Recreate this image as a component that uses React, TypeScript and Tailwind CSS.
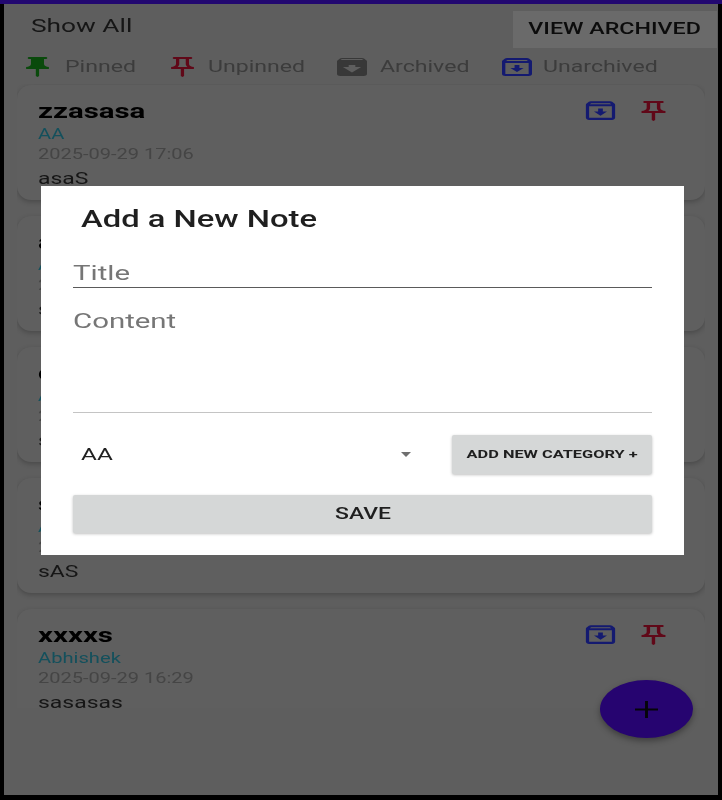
import React from 'react';

const PIN_OUTLINE =
    'M14 4v5c0 1.12.37 2.16 1 3H9c.65-.86 1-1.9 1-3V4h4m3-2H7c-.55 0-1 .45-1 1s.45 1 1 1h1v5c0 1.66-1.34 3-3 3v2h5.97v7l1 1 1-1v-7H19v-2c-1.66 0-3-1.34-3-3V4h1c.55 0 1-.45 1-1s-.45-1-1-1z';
const PIN_FILLED =
    'M16 9V4h1c.55 0 1-.45 1-1s-.45-1-1-1H7c-.55 0-1 .45-1 1s.45 1 1 1h1v5c0 1.66-1.34 3-3 3v2h5.97v7l1 1 1-1v-7H19v-2c-1.66 0-3-1.34-3-3z';
const ARCHIVE_OUTLINE =
    'm20.54 5.23-1.39-1.68C18.88 3.21 18.47 3 18 3H6c-.47 0-.88.21-1.16.55L3.46 5.23C3.17 5.57 3 6.02 3 6.5V19c0 1.1.9 2 2 2h14c1.1 0 2-.9 2-2V6.5c0-.48-.17-.93-.46-1.27zM6.24 5h11.52l.81.97H5.44l.8-.97zM5 19V8h14v11H5zm8.45-9h-2.9v3H8l4 4 4-4h-2.55z';
const ARCHIVE_FILLED =
    'M20.54 5.23l-1.39-1.68C18.88 3.21 18.47 3 18 3H6c-.47 0-.88.21-1.16.55L3.46 5.23C3.17 5.57 3 6.02 3 6.5V19c0 1.1.9 2 2 2h14c1.1 0 2-.9 2-2V6.5c0-.48-.17-.93-.46-1.27zM12 17.5L6.5 12H10v-2h4v2h3.5L12 17.5zM5.12 5l.81-1h12l.94 1H5.12z';

interface IIcon {
    d: string;
    className: string;
}

const Icon = ({ d, className }: IIcon) => (
    <svg viewBox="0 0 24 24" preserveAspectRatio="none" className={className} fill="currentColor">
        <path d={d} />
    </svg>
);

// the whole screenshot is stretched sideways, so text gets the same treatment
const Wide = ({ children, center }: { children: React.ReactNode; center?: boolean }) => (
    <span
        className={
            center
                ? 'inline-block origin-center scale-x-[1.4] whitespace-nowrap'
                : 'inline-block origin-left scale-x-[1.4] whitespace-nowrap'
        }
    >
        {children}
    </span>
);

interface INote {
    title: string;
    category: string;
    date: string;
    body: string;
}

const notes: INote[] = [
    { title: 'zzasasa', category: 'AA', date: '2025-09-29 17:06', body: 'asaS' },
    { title: 'asasas', category: 'AA', date: '2025-09-29 17:02', body: 'sasas' },
    { title: 'cscsc', category: 'AA', date: '2025-09-29 16:50', body: 'sasa' },
    { title: 'sasas', category: 'Abhishek', date: '2025-09-29 16:41', body: 'sAS' },
    { title: 'xxxxs', category: 'Abhishek', date: '2025-09-29 16:29', body: 'sasasas' },
];

const NoteCard = ({ title, category, date, body }: INote) => (
    <div className="relative h-[115px] shrink-0 rounded-[14px] bg-[#5f5f5f] pl-[21px] pt-[13px] shadow-[0_2px_5px_rgba(0,0,0,0.22)]">
        <div className="text-[21px] leading-[26px] font-bold text-black">
            <Wide>{title}</Wide>
        </div>
        <div className="mt-[2px] text-[14.4px] leading-[18px] text-[#14505c]">
            <Wide>{category}</Wide>
        </div>
        <div className="text-[14.3px] leading-[20px] text-[#454545]">
            <Wide>{date}</Wide>
        </div>
        <div className="mt-[4px] text-[16.4px] leading-[22px] text-[#161616]">
            <Wide>{body}</Wide>
        </div>
        <div className="absolute top-[13px] right-[31px] flex items-center gap-[13px]">
            <Icon d={ARCHIVE_OUTLINE} className="h-[25px] w-[39px] text-[#141a70]" />
            <Icon d={PIN_OUTLINE} className="h-[24px] w-[41px] text-[#600818]" />
        </div>
    </div>
);

export default function App() {
    return (
        <div className="relative h-[800px] w-[722px] overflow-hidden bg-black font-['Roboto',sans-serif] blur-[0.7px]">
            <div className="h-[4px] bg-[#220870]" />
            <div className="mx-[4px] flex h-[791px] flex-col bg-[#5e5e5e]">
                <div className="flex h-[44px] items-start justify-between pl-[27px] pr-[1px] pt-[7px]">
                    <span className="mt-[3px] text-[18.8px] leading-[24px] text-[#161616]">
                        <Wide>Show All</Wide>
                    </span>
                    <div className="flex h-[37px] w-[204px] items-center justify-center bg-[#6a6a6a] text-[16.6px] font-medium text-[#0c0c0c]">
                        <Wide center>VIEW ARCHIVED</Wide>
                    </div>
                </div>
                <div className="flex h-[38px] items-center pl-[14px] text-[16.5px] text-[#3c3c3c]">
                    <Icon d={PIN_FILLED} className="h-[24px] w-[39px] text-[#0a4a0c]" />
                    <span className="ml-[8px] w-[98px]">
                        <Wide>Pinned</Wide>
                    </span>
                    <Icon d={PIN_OUTLINE} className="h-[24px] w-[39px] text-[#600818]" />
                    <span className="ml-[6px] w-[124px]">
                        <Wide>Unpinned</Wide>
                    </span>
                    <Icon d={ARCHIVE_FILLED} className="h-[24px] w-[40px] text-[#383838]" />
                    <span className="ml-[8px] w-[117px]">
                        <Wide>Archived</Wide>
                    </span>
                    <Icon d={ARCHIVE_OUTLINE} className="h-[24px] w-[40px] text-[#141a70]" />
                    <span className="ml-[6px]">
                        <Wide>Unarchived</Wide>
                    </span>
                </div>
                <div className="mx-[13px] -mt-[2px] flex h-[624px] flex-col gap-[16px] overflow-hidden pt-[1px]">
                    {notes.map((note) => (
                        <NoteCard key={note.title} {...note} />
                    ))}
                </div>
            </div>

            {/* add note dialog */}
            <div className="absolute top-[186px] left-[41px] h-[369px] w-[643px] bg-white">
                <div className="pl-[40px] pt-[17px] text-[23.4px] leading-[32px] font-medium text-[#1f1f1f]">
                    <Wide>Add a New Note</Wide>
                </div>
                <div className="mx-[32px] mt-[13px] flex h-[40px] items-end border-b border-[#5a5a5a] text-[21px] leading-[28px] text-[#767676]">
                    <Wide>Title</Wide>
                </div>
                <div className="mx-[32px] h-[125px] border-b border-[#c4c4c4] pt-[19px] text-[21px] leading-[28px] text-[#767676]">
                    <Wide>Content</Wide>
                </div>
                <div className="mx-[32px] mt-[22px] flex h-[39px] items-center">
                    <span className="ml-[8px] text-[17.4px] text-[#222222]">
                        <Wide>AA</Wide>
                    </span>
                    <svg viewBox="0 0 14 7" className="ml-auto mr-[39px] h-[5px] w-[14px] fill-[#6f6f6f]">
                        <path d="M0 0h14L7 7z" />
                    </svg>
                    <div className="flex h-[39px] w-[200px] items-center justify-center rounded-[2px] bg-[#d5d7d7] text-[11.7px] font-bold text-[#1f1f1f] shadow-[0_1px_3px_rgba(0,0,0,0.25)]">
                        <Wide center>ADD NEW CATEGORY +</Wide>
                    </div>
                </div>
                <div className="mx-[32px] mt-[21px] flex h-[38px] items-center justify-center rounded-[2px] bg-[#d5d7d7] text-[16.4px] font-medium text-[#1f1f1f] shadow-[0_1px_3px_rgba(0,0,0,0.25)]">
                    <Wide center>SAVE</Wide>
                </div>
            </div>

            <div className="absolute top-[680px] left-[600px] flex h-[58px] w-[93px] items-center justify-center rounded-[50%] bg-[#260470] shadow-[0_3px_6px_rgba(0,0,0,0.35)]">
                <svg viewBox="0 0 24 24" preserveAspectRatio="none" className="h-[17px] w-[23px]" fill="none" stroke="#050508" strokeWidth="3">
                    <path d="M12 0v24M0 12h24" />
                </svg>
            </div>
        </div>
    );
}
